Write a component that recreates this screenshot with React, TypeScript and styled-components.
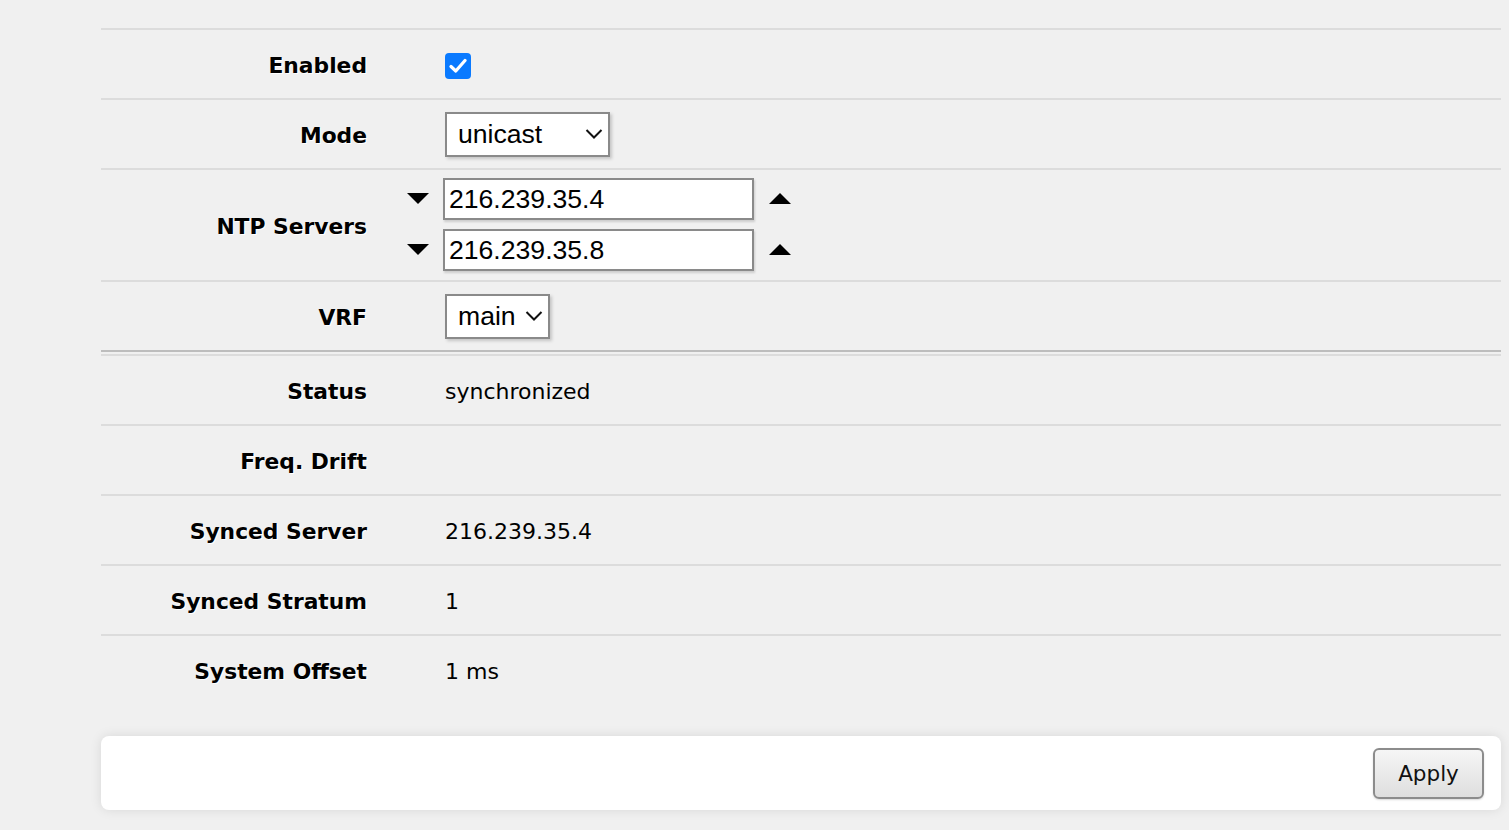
import React from "react";
import styled, { createGlobalStyle } from "styled-components";

const GlobalStyle = createGlobalStyle`
  html, body {
    margin: 0;
    padding: 0;
    background: #f0f0f0;
  }
  body {
    font-family: "DejaVu Sans", Verdana, sans-serif;
    color: #000;
  }
`;

const Page = styled.div`
  width: 1400px;
  padding: 28px 0 20px 101px;
`;

const Section = styled.div<{ $topLine?: string; $gap?: number }>`
  border-top: 2px solid ${(p) => p.$topLine || "#dcdcdc"};
  margin-top: ${(p) => p.$gap || 0}px;
`;

const Row = styled.div<{ $line?: string; $height?: number }>`
  display: grid;
  grid-template-columns: 266px 1fr;
  align-items: center;
  min-height: ${(p) => p.$height || 68}px;
  border-bottom: 2px solid ${(p) => p.$line || "#dcdcdc"};
  &:last-child {
    border-bottom-color: ${(p) => p.$line || "transparent"};
  }
`;

const Label = styled.div`
  text-align: right;
  font-weight: bold;
  font-size: 21.8px;
  text-shadow: 1px 1px 0 #fff;
  white-space: nowrap;
  padding-top: 3px;
`;

const Value = styled.div<{ $inset?: number; $shift?: number }>`
  padding-left: ${(p) => (p.$inset !== undefined ? p.$inset : 78)}px;
  padding-top: ${(p) => p.$shift || 0}px;
  font-size: 22px;
  display: flex;
  align-items: center;
`;

const CheckBox = styled.span`
  width: 26px;
  height: 26px;
  border-radius: 4px;
  background: #0a7aff;
  display: inline-flex;
  align-items: center;
  justify-content: center;
`;

const SelectWrap = styled.div`
  position: relative;
  display: inline-block;
`;

const SelectField = styled.select<{ $width: number }>`
  appearance: none;
  -webkit-appearance: none;
  width: ${(p) => p.$width}px;
  height: 45px;
  box-sizing: border-box;
  border: 2px solid #8a8a8a;
  border-radius: 0;
  background: #fff;
  box-shadow: 2px 2px 3px rgba(0, 0, 0, 0.18);
  font-family: "Liberation Sans", Arial, sans-serif;
  font-size: 26.6px;
  color: #000;
  padding: 0 0 0 11px;
  outline: none;
`;

const Chevron = styled.svg`
  position: absolute;
  right: 7px;
  top: 50%;
  transform: translateY(-50%);
  pointer-events: none;
`;

const ServerList = styled.div`
  display: flex;
  flex-direction: column;
  gap: 9px;
  padding: 8px 0 9px;
`;

const ServerRow = styled.div`
  display: flex;
  align-items: center;
`;

const Arrow = styled.svg<{ $side: "left" | "right" }>`
  flex: none;
  margin-right: ${(p) => (p.$side === "left" ? 14 : 0)}px;
  margin-left: ${(p) => (p.$side === "right" ? 15 : 0)}px;
  margin-top: -1px;
`;

const TextInput = styled.input`
  width: 311px;
  height: 42px;
  box-sizing: border-box;
  border: 2px solid #8a8a8a;
  border-radius: 0;
  background: #fff;
  box-shadow: 1px 2px 2px rgba(0, 0, 0, 0.15);
  font-family: "Liberation Sans", Arial, sans-serif;
  font-size: 26.6px;
  color: #000;
  padding: 0 0 0 4px;
  outline: none;
`;

const Footer = styled.div`
  margin-top: 30px;
  background: #fff;
  border-radius: 8px;
  box-shadow: 0 0 12px rgba(0, 0, 0, 0.1);
  display: flex;
  justify-content: flex-end;
  padding: 12px 17px 11px;
`;

const Button = styled.button`
  width: 111px;
  height: 51px;
  box-sizing: border-box;
  border: 2px solid #8c8c8c;
  border-radius: 6px;
  background: linear-gradient(#f6f6f6, #dedede);
  box-shadow: 0 1px 2px rgba(0, 0, 0, 0.15);
  font-family: "DejaVu Sans", Verdana, sans-serif;
  font-size: 21.5px;
  color: #111;
  cursor: pointer;
  padding: 0;
`;

const ChevronIcon = () => (
  <Chevron width="18" height="11" viewBox="0 0 18 11">
    <path d="M1.5 1.5 L9 9 L16.5 1.5" fill="none" stroke="#111" strokeWidth="2" />
  </Chevron>
);

const Down = () => (
  <Arrow $side="left" width="22" height="11" viewBox="0 0 22 11">
    <polygon points="0,0 22,0 11,11" fill="#000" />
  </Arrow>
);

const Up = () => (
  <Arrow $side="right" width="22" height="11" viewBox="0 0 22 11">
    <polygon points="0,11 22,11 11,0" fill="#000" />
  </Arrow>
);

const servers = ["216.239.35.4", "216.239.35.8"];

const status: [string, string][] = [
  ["Status", "synchronized"],
  ["Freq. Drift", ""],
  ["Synced Server", "216.239.35.4"],
  ["Synced Stratum", "1"],
  ["System Offset", "1 ms"],
];

export default function App() {
  return (
    <>
      <GlobalStyle />
      <Page>
        <Section>
          <Row>
            <Label>Enabled</Label>
            <Value $shift={3}>
              <CheckBox>
                <svg width="18" height="16" viewBox="0 0 18 16">
                  <path d="M2 8.5 L6.8 13 L16 2.5" fill="none" stroke="#fff" strokeWidth="3.2" strokeLinecap="round" strokeLinejoin="round" />
                </svg>
              </CheckBox>
            </Value>
          </Row>
          <Row>
            <Label>Mode</Label>
            <Value>
              <SelectWrap>
                <SelectField $width={165} defaultValue="unicast">
                  <option value="unicast">unicast</option>
                  <option value="broadcast">broadcast</option>
                  <option value="multicast">multicast</option>
                  <option value="manycast">manycast</option>
                </SelectField>
                <ChevronIcon />
              </SelectWrap>
            </Value>
          </Row>
          <Row>
            <Label>NTP Servers</Label>
            <Value $inset={40}>
              <ServerList>
                {servers.map((s) => (
                  <ServerRow key={s}>
                    <Down />
                    <TextInput defaultValue={s} />
                    <Up />
                  </ServerRow>
                ))}
              </ServerList>
            </Value>
          </Row>
          <Row $line="#bdbdbd">
            <Label>VRF</Label>
            <Value>
              <SelectWrap>
                <SelectField $width={105} defaultValue="main">
                  <option value="main">main</option>
                </SelectField>
                <ChevronIcon />
              </SelectWrap>
            </Value>
          </Row>
        </Section>
        <Section $gap={2}>
          {status.map(([k, v]) => (
            <Row key={k}>
              <Label>{k}</Label>
              <Value $shift={3}>{v}</Value>
            </Row>
          ))}
        </Section>
        <Footer>
          <Button>Apply</Button>
        </Footer>
      </Page>
    </>
  );
}
